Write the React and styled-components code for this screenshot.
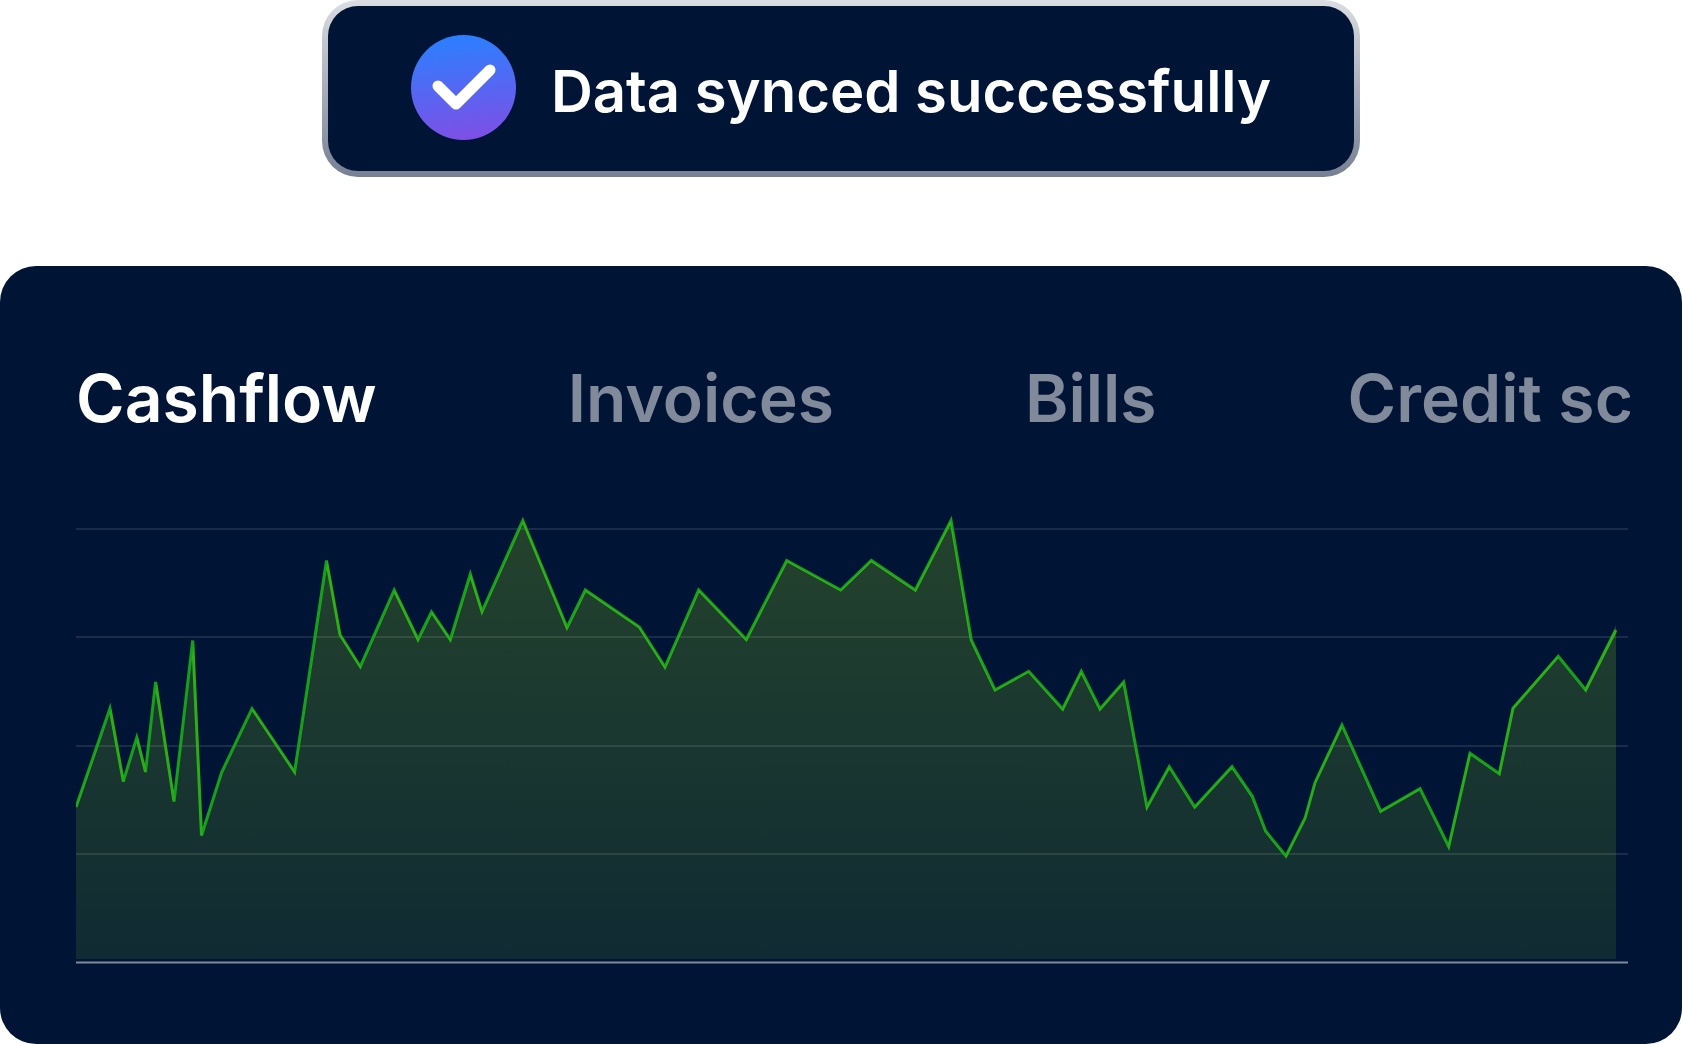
import React, { useState } from 'react';
import styled, { createGlobalStyle } from 'styled-components';

const GlobalStyle = createGlobalStyle`
  *, *::before, *::after {
    box-sizing: border-box;
  }

  body {
    margin: 0;
    background: #ffffff;
    font-family: Inter, 'Liberation Sans', sans-serif;
  }
`;

const Page = styled.main`
  display: flex;
  flex-direction: column;
  gap: 89px;
`;

const Toast = styled.div`
  align-self: center;
  display: flex;
  align-items: center;
  gap: 35px;
  padding: 29px 83px 31px 83px;
  border: 6px solid transparent;
  border-radius: 36px;
  background: linear-gradient(#001536, #001536) padding-box,
    linear-gradient(180deg, #dadde2, #758093) border-box;
`;

const ToastIcon = styled.svg`
  flex: none;
  width: 105px;
  height: 105px;
`;

const ToastText = styled.p`
  margin: 0;
  padding-top: 7px;
  color: #ffffff;
  font-size: 58px;
  font-weight: 600;
  line-height: 70px;
  white-space: nowrap;
`;

const Card = styled.section`
  display: flex;
  flex-direction: column;
  gap: 74px;
  padding: 92px 52px 80px 76px;
  border-radius: 36px;
  background: #001536;
`;

const Tabs = styled.div`
  display: flex;
  gap: 191px;
  overflow: hidden;
`;

const Tab = styled.button`
  flex: none;
  padding: 0;
  border: 0;
  background: none;
  color: ${({ $active }) => ($active ? '#ffffff' : '#808a9b')};
  font-family: inherit;
  font-size: 66px;
  font-weight: 600;
  line-height: 80px;
  white-space: nowrap;
  cursor: pointer;
`;

const ChartSvg = styled.svg`
  display: block;
  width: 100%;
  height: auto;
`;

const tabs = ['Cashflow', 'Invoices', 'Bills', 'Credit score'];

const gridLines = [529, 637, 746, 854];

const points = [
  [76, 807], [110, 708.5], [123.3, 781.5], [136.8, 737.5], [145.5, 772],
  [155.6, 682], [174, 801.5], [192.7, 640.5], [201.5, 835.5], [221.6, 772.5],
  [252, 708.7], [294.6, 772], [326.5, 560.5], [340, 634.7], [360.3, 666.7],
  [394.2, 590], [418, 639.5], [431.5, 612], [450.3, 639.5], [470.3, 574],
  [482, 611.5], [522.8, 520.5], [567, 627.5], [585.3, 590], [639.3, 627],
  [665, 667], [698.7, 590], [746.3, 639.5], [786.7, 560.5], [840.7, 590],
  [871.3, 560.5], [915.3, 590], [951, 520.5], [971.3, 640], [995, 690],
  [1028.7, 671.3], [1062.7, 709], [1081.3, 671.3], [1100, 709], [1123.7, 682],
  [1147, 807], [1169.3, 766.7], [1194.7, 807], [1232, 766.7], [1252.3, 796.3],
  [1265.7, 831.3], [1286, 856], [1305, 818.3], [1315, 782.7], [1342, 725],
  [1380.7, 811.3], [1420, 788.7], [1448.7, 846.5], [1470, 753.3],
  [1499.3, 773.7], [1513, 708.3], [1558.3, 656.3], [1585.7, 690], [1616, 630],
];

// the fill is a touch narrower than the line and covers part of the stroke
const areaPoints = [
  [76, 959],
  [76, 806],
  ...points.slice(1, -1).map(([x, y]) => [x + (850 - x) / 500, y]),
  [1616, 625],
  [1616, 959],
];

const toPoints = list => list.map(point => point.join(',')).join(' ');

const CashflowChart = () => (
  <ChartSvg viewBox="76 512 1554 452" role="img" aria-label="Cashflow chart">
    <defs>
      <linearGradient
        id="area"
        gradientUnits="userSpaceOnUse"
        x1="0"
        y1="520"
        x2="0"
        y2="959"
      >
        <stop offset="0" stopColor="#b4fb04" stopOpacity="0.2" />
        <stop offset="1" stopColor="#a8fb14" stopOpacity="0.095" />
      </linearGradient>
    </defs>
    {gridLines.map(y => (
      <line
        key={y}
        x1="76"
        x2="1628"
        y1={y}
        y2={y}
        stroke="#ffffff"
        strokeOpacity="0.1"
        strokeWidth="2"
      />
    ))}
    <line x1="76" x2="1628" y1="962.5" y2="962.5" stroke="#808a9b" strokeWidth="2" />
    <polyline
      points={toPoints(points)}
      fill="none"
      stroke="#14a01a"
      strokeWidth="3"
    />
    <polygon points={toPoints(areaPoints)} fill="url(#area)" />
  </ChartSvg>
);

const App = () => {
  const [activeTab, setActiveTab] = useState('Cashflow');

  return (
    <>
      <GlobalStyle />
      <Page>
        <Toast role="status">
          <ToastIcon viewBox="0 0 105 105" aria-hidden="true">
            <defs>
              <linearGradient id="badge" x1="0.45" y1="0" x2="0.55" y2="1">
                <stop offset="0" stopColor="#2a80ff" />
                <stop offset="1" stopColor="#7e4fe6" />
              </linearGradient>
            </defs>
            <circle cx="52.5" cy="52.5" r="52.5" fill="url(#badge)" />
            <path
              d="M27 51 L45 69 L79 35"
              fill="none"
              stroke="#ffffff"
              strokeWidth="11"
              strokeLinecap="round"
              strokeLinejoin="round"
            />
          </ToastIcon>
          <ToastText>Data synced successfully</ToastText>
        </Toast>

        <Card>
          <Tabs role="tablist">
            {tabs.map(tab => (
              <Tab
                key={tab}
                type="button"
                role="tab"
                aria-selected={tab === activeTab}
                $active={tab === activeTab}
                onClick={() => setActiveTab(tab)}
              >
                {tab}
              </Tab>
            ))}
          </Tabs>
          <CashflowChart />
        </Card>
      </Page>
    </>
  );
};

export default App;
